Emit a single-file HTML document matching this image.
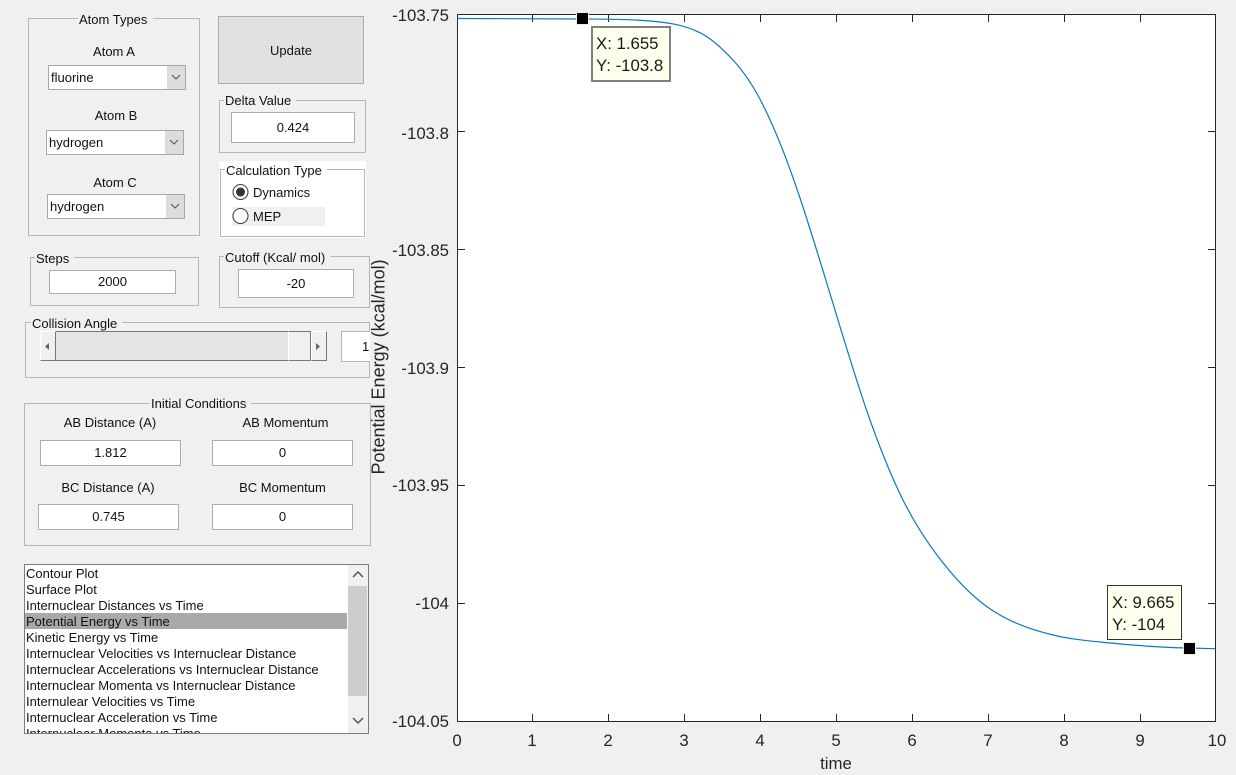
<!DOCTYPE html>
<html><head><meta charset="utf-8"><style>
html,body{margin:0;padding:0}
body{width:1236px;height:775px;background:#f0f0f0;position:relative;overflow:hidden;font-family:"Liberation Sans",sans-serif;font-size:13px;color:#111}
div{position:absolute;box-sizing:border-box}
.g{border:1px solid #b6b6b6}
.t{white-space:nowrap;line-height:16px;height:14px}
.c{text-align:center}
.l{background:#f0f0f0;padding:0 5px 0 1px}
.e{background:#fff;border:1px solid #acacac;text-align:center;line-height:23px}
.p{background:#fff;border:1px solid #a8a8a8;width:138px;height:25px;line-height:23px;padding-left:2px}
.p i{position:absolute;right:0;top:0;width:18px;height:23px;background:#dcdcdc}
.p svg{position:absolute;right:4px;top:8px}
.r{position:absolute;left:0;height:16px;line-height:17px;width:322px;padding-left:1px;white-space:nowrap}
.a{font-size:16.800px;line-height:20px;height:20px;white-space:nowrap;color:#262626}
.ar{text-align:right;width:70px;left:379px}
.ac{text-align:center;width:40px}
</style></head><body>

<div class="g" style="left:28px;top:18px;width:172px;height:218px"></div>
<div class="t l" style="left:78px;top:12px;padding:0 6px 0 1px">Atom Types</div>
<div class="t c" style="left:64px;top:44px;width:100px">Atom A</div>
<div class="p" style="left:48px;top:65px">fluorine<i></i><svg width="10" height="7"><path d="M1 1L5 5L9 1" fill="none" stroke="#555"/></svg></div>
<div class="t c" style="left:66px;top:108px;width:100px">Atom B</div>
<div class="p" style="left:46px;top:130px">hydrogen<i></i><svg width="10" height="7"><path d="M1 1L5 5L9 1" fill="none" stroke="#555"/></svg></div>
<div class="t c" style="left:65px;top:175px;width:100px">Atom C</div>
<div class="p" style="left:47px;top:194px">hydrogen<i></i><svg width="10" height="7"><path d="M1 1L5 5L9 1" fill="none" stroke="#555"/></svg></div>

<div style="left:218px;top:16px;width:146px;height:68px;background:#e1e1e1;border:1px solid #adadad;text-align:center;line-height:68px">Update</div>

<div class="g" style="left:219px;top:100px;width:147px;height:53px"></div>
<div class="t l" style="left:224px;top:93px">Delta Value</div>
<div class="e" style="left:231px;top:112px;width:124px;height:31px;line-height:29px">0.424</div>

<div style="left:219px;top:161px;width:147px;height:77px;background:#fff"></div>
<div class="g" style="left:220px;top:169px;width:145px;height:68px"></div>
<div class="t" style="left:225px;top:163px;background:#fff;padding:0 5px 0 1px">Calculation Type</div>
<div style="left:232px;top:207px;width:93px;height:19px;background:#f0f0f0"></div>
<svg style="position:absolute;left:232px;top:183px" width="18" height="44"><circle cx="8.500" cy="9" r="7.500" fill="#fff" stroke="#333"/><circle cx="8.500" cy="9" r="4.500" fill="#333"/><circle cx="8.500" cy="33" r="7.500" fill="#fff" stroke="#333"/></svg>
<div class="t" style="left:253px;top:185px">Dynamics</div>
<div class="t" style="left:253px;top:209px">MEP</div>

<div class="g" style="left:30px;top:257px;width:169px;height:49px"></div>
<div class="t l" style="left:35px;top:251px">Steps</div>
<div class="e" style="left:49px;top:270px;width:127px;height:24px;line-height:22px">2000</div>

<div class="g" style="left:219px;top:256px;width:151px;height:52px"></div>
<div class="t l" style="left:224px;top:250px">Cutoff (Kcal/ mol)</div>
<div class="e" style="left:238px;top:269px;width:116px;height:29px;line-height:27px">-20</div>

<div class="g" style="left:25px;top:322px;width:345px;height:56px"></div>
<div class="t l" style="left:31px;top:316px">Collision Angle</div>
<div style="left:40px;top:331px;width:287px;height:30px;background:#e4e4e4;border-top:1px solid #777;border-bottom:1px solid #777"></div>
<div style="left:40px;top:331px;width:16px;height:30px;background:#f0f0f0;border-right:1px solid #777;border-bottom:1px solid #777;border-top:1px solid #fff;border-left:1px solid #fff"></div>
<div style="left:288px;top:331px;width:23px;height:30px;background:#f0f0f0;border-right:1px solid #777;border-bottom:1px solid #777;border-left:1px solid #fff;border-top:1px solid #777"></div>
<div style="left:311px;top:331px;width:16px;height:30px;background:#f0f0f0;border-right:1px solid #777;border-bottom:1px solid #777;border-top:1px solid #fff;border-left:1px solid #fff"></div>
<svg style="position:absolute;left:40px;top:331px" width="287" height="30"><path d="M9 12V19L5 15.500Z M276 12V19L280 15.500Z" fill="#666"/></svg>
<div style="left:341px;top:331px;width:29px;height:31px;background:#fff;border:1px solid #b6b6b6;border-right:0;line-height:30px;padding-left:20px;overflow:hidden">1</div>

<div class="g" style="left:24px;top:403px;width:347px;height:143px"></div>
<div class="t l" style="left:150px;top:396px;padding:0 5px 0 1px">Initial Conditions</div>
<div class="t c" style="left:40px;top:415px;width:140px">AB Distance (A)</div>
<div class="t c" style="left:215px;top:415px;width:141px">AB Momentum</div>
<div class="e" style="left:40px;top:440px;width:141px;height:26px;line-height:24px">1.812</div>
<div class="e" style="left:212px;top:440px;width:141px;height:26px;line-height:24px">0</div>
<div class="t c" style="left:38px;top:480px;width:140px">BC Distance (A)</div>
<div class="t c" style="left:212px;top:480px;width:141px">BC Momentum</div>
<div class="e" style="left:38px;top:504px;width:141px;height:26px;line-height:24px">0.745</div>
<div class="e" style="left:212px;top:504px;width:141px;height:26px;line-height:24px">0</div>

<div style="left:24px;top:564px;width:345px;height:170px;background:#fff;border:1px solid #7a7a8a;overflow:hidden">
<div class="r" style="top:0">Contour Plot</div>
<div class="r" style="top:16px">Surface Plot</div>
<div class="r" style="top:32px">Internuclear Distances vs Time</div>
<div class="r" style="top:48px;background:#a9a9a9">Potential Energy vs Time</div>
<div class="r" style="top:64px">Kinetic Energy vs Time</div>
<div class="r" style="top:80px">Internuclear Velocities vs Internuclear Distance</div>
<div class="r" style="top:96px">Internuclear Accelerations vs Internuclear Distance</div>
<div class="r" style="top:112px">Internuclear Momenta vs Internuclear Distance</div>
<div class="r" style="top:128px">Internulear Velocities vs Time</div>
<div class="r" style="top:144px">Internuclear Acceleration vs Time</div>
<div class="r" style="top:160px">Internuclear Momenta vs Time</div>
<div style="left:323px;top:0;width:20px;height:168px;background:#f0f0f0"></div>
<div style="left:323px;top:21px;width:19px;height:110px;background:#cdcdcd"></div>
<svg style="position:absolute;left:323px;top:0" width="20" height="168"><path d="M5 12L10 7L15 12M5 153L10 158L15 153" fill="none" stroke="#555" stroke-width="1.500"/></svg>
</div>

<svg style="position:absolute;left:0;top:0" width="1236" height="775">
<rect x="457.500" y="14.500" width="758" height="707" fill="#fff" stroke="#262626"/>
<path d="M532.500 15V22M608.500 15V22M684.500 15V22M760.500 15V22M836.500 15V22M912.500 15V22M988.500 15V22M1064.500 15V22M1140.500 15V22M532.500 721V714M608.500 721V714M684.500 721V714M760.500 721V714M836.500 721V714M912.500 721V714M988.500 721V714M1064.500 721V714M1140.500 721V714M457 131.500H465M457 249.500H465M457 367.500H465M457 485.500H465M457 603.500H465M1215 131.500H1208M1215 249.500H1208M1215 367.500H1208M1215 485.500H1208M1215 603.500H1208" stroke="#262626" fill="none"/>
<path fill="none" stroke="#0a78c8" stroke-width="1.200" d="M457,18.500C499,18.500 541,18.600 583,19C605.300,19.200 627.700,19 650,21C666.700,22.500 683.300,24.400 700,32.700C711,38.200 722,48.200 733,60C743,70.700 753,85 763,105C775.300,129.700 787.700,161 800,198C812.700,236 825.300,278.200 838,320C848.700,355.200 859.300,390.100 870,420C881,450.800 892,478 903,500C914.300,522.700 925.700,540 937,555C953.700,577.200 970.300,594.800 987,606.700C1009,622.300 1031,629.700 1053,635C1072,639.600 1091,641.100 1110,643C1136,645.600 1162,647.400 1188,648C1197,648.300 1206,648.500 1215,648.700"/>
<rect x="576" y="12" width="13" height="13" fill="#f2f0d0"/><rect x="577" y="13" width="11" height="11" fill="#000"/>
<rect x="1183" y="642" width="13" height="13" fill="#f2f0d0"/><rect x="1184" y="643" width="11" height="11" fill="#000"/>
</svg>

<div class="a" style="left:271px;top:357px;width:215px;text-align:center;transform:rotate(-90deg);font-size:18px">Potential Energy (kcal/mol)</div>

<div class="a ar" style="top:6px">-103.75</div>
<div class="a ar" style="top:124px">-103.8</div>
<div class="a ar" style="top:241px">-103.85</div>
<div class="a ar" style="top:359px">-103.9</div>
<div class="a ar" style="top:476px">-103.95</div>
<div class="a ar" style="top:594px">-104</div>
<div class="a ar" style="top:712px">-104.05</div>

<div class="a ac" style="left:437px;top:731px">0</div>
<div class="a ac" style="left:512px;top:731px">1</div>
<div class="a ac" style="left:588px;top:731px">2</div>
<div class="a ac" style="left:664px;top:731px">3</div>
<div class="a ac" style="left:740px;top:731px">4</div>
<div class="a ac" style="left:816px;top:731px">5</div>
<div class="a ac" style="left:892px;top:731px">6</div>
<div class="a ac" style="left:968px;top:731px">7</div>
<div class="a ac" style="left:1044px;top:731px">8</div>
<div class="a ac" style="left:1120px;top:731px">9</div>
<div class="a ac" style="left:1197px;top:731px">10</div>
<div class="a" style="left:796px;top:754px;width:80px;text-align:center">time</div>

<div style="left:591px;top:26px;width:80px;height:56px;background:#ffffee;border:2px solid #7f7f7f"></div>
<div class="a" style="left:596px;top:34px;color:#1a1a1a">X: 1.655</div>
<div class="a" style="left:596px;top:56px;color:#1a1a1a">Y: -103.8</div>

<div style="left:1107px;top:585px;width:75px;height:55px;background:#ffffee;border:1px solid #333"></div>
<div class="a" style="left:1112px;top:593px;color:#1a1a1a">X: 9.665</div>
<div class="a" style="left:1112px;top:615px;color:#1a1a1a">Y: -104</div>

</body></html>
